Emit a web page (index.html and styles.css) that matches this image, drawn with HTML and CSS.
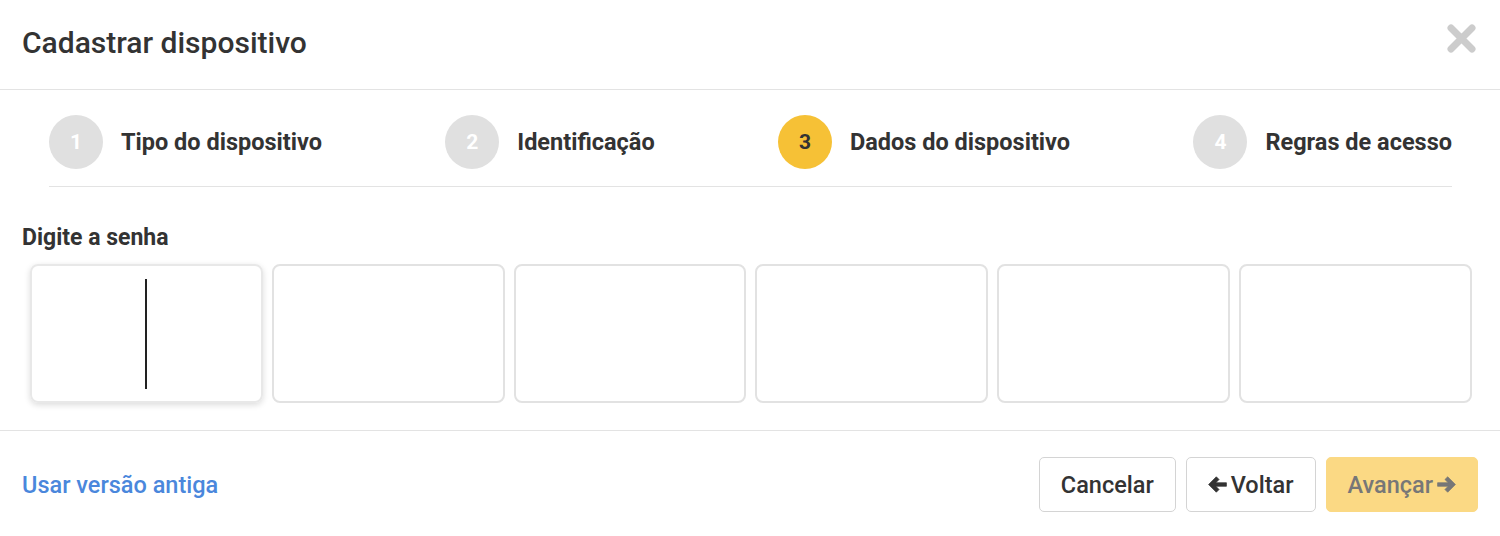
FILE: index.html
```html
<!DOCTYPE html>
<html lang="pt-BR">
<head>
  <meta charset="UTF-8" />
  <meta name="viewport" content="width=device-width, initial-scale=1.0"/>
  <title>Cadastrar dispositivo</title>
  <link rel="stylesheet" href="styles.css">
</head>
<body>

<div class="modal">
  <div class="modal-header">
    <h1>Cadastrar dispositivo</h1>
    <button class="close" aria-label="Fechar">
      <svg width="29" height="29" viewBox="0 0 29 29">
        <path d="M4 4 L25 25 M25 4 L4 25" stroke="#cccccc" stroke-width="7" stroke-linecap="round"/>
      </svg>
    </button>
  </div>

  <div class="steps-wrap">
    <div class="steps">
      <div class="step"><span class="num">1</span><span class="label">Tipo do dispositivo</span></div>
      <div class="step"><span class="num">2</span><span class="label">Identificação</span></div>
      <div class="step active"><span class="num">3</span><span class="label">Dados do dispositivo</span></div>
      <div class="step"><span class="num">4</span><span class="label">Regras de acesso</span></div>
    </div>
  </div>

  <div class="modal-body">
    <label class="field-label">Digite a senha</label>
    <div class="pin">
      <div class="pin-box focus"><span class="caret"></span></div>
      <div class="pin-box"></div>
      <div class="pin-box"></div>
      <div class="pin-box"></div>
      <div class="pin-box"></div>
      <div class="pin-box"></div>
    </div>
  </div>

  <div class="modal-footer">
    <a href="#" class="old-link">Usar versão antiga</a>
    <div class="actions">
      <button class="btn">Cancelar</button>
      <button class="btn">
        <svg class="arrow" width="19" height="19" viewBox="0 0 16 16">
          <path d="M0.5 8 L7 1.5 L9.3 3.8 L6.6 6.5 H15.5 V9.5 H6.6 L9.3 12.2 L7 14.5 Z" fill="#333" stroke="#333" stroke-width="0.6" stroke-linejoin="round"/>
        </svg>Voltar
      </button>
      <button class="btn btn-primary" disabled>Avançar
        <svg class="arrow" width="19" height="19" viewBox="0 0 16 16">
          <path d="M15.5 8 L9 1.5 L6.7 3.8 L9.4 6.5 H0.5 V9.5 H9.4 L6.7 12.2 L9 14.5 Z" fill="#777" stroke="#777" stroke-width="0.6" stroke-linejoin="round"/>
        </svg>
      </button>
    </div>
  </div>
</div>

</body>
</html>
```

FILE: styles.css
```css
body {
  margin: 0;
  background: #fff;
  font-family: 'Roboto', 'Liberation Sans', sans-serif;
  color: #333;
}
.modal {
  width: 1500px;
  height: 536px;
  background: #fff;
}
.modal-header {
  height: 90px;
  border-bottom: 1px solid #e3e3e3;
  display: flex;
  align-items: center;
  justify-content: space-between;
  padding: 0 24px 0 22px;
  box-sizing: border-box;
}
.modal-header h1 {
  margin: 0;
  font-size: 30px;
  line-height: 34px;
  font-weight: 500;
  color: #333;
  margin-top: -4px;
}
.close {
  background: none;
  border: none;
  padding: 0;
  cursor: pointer;
  display: flex;
  margin-top: -13px;
}
.steps-wrap {
  padding: 0 48px 0 49px;
}
.steps {
  display: flex;
  justify-content: space-between;
  align-items: center;
  padding: 25px 0 17px;
  border-bottom: 1px solid #e3e3e3;
}
.step {
  display: flex;
  align-items: center;
}
.step .num {
  width: 54px;
  height: 54px;
  border-radius: 50%;
  background: #e0e0e0;
  color: #fff;
  font-size: 21px;
  font-weight: 700;
  display: flex;
  align-items: center;
  justify-content: center;
  margin-right: 18px;
}
.step.active .num {
  background: #f6c136;
  color: #333;
}
.step .label {
  font-size: 23.5px;
  font-weight: 700;
  color: #333;
}
.modal-body {
  padding: 37px 28px 27px 22px;
  border-bottom: 1px solid #e3e3e3;
}
.field-label {
  display: block;
  font-size: 23px;
  line-height: 27px;
  font-weight: 700;
  margin-bottom: 13px;
}
.pin {
  display: flex;
  gap: 9px;
  padding-left: 8px;
}
.pin-box {
  flex: 1;
  height: 139px;
  box-sizing: border-box;
  border: 2px solid #e2e2e2;
  border-radius: 8px;
  display: flex;
  align-items: center;
  justify-content: center;
}
.pin-box.focus {
  border-color: #e8e8e8;
  box-shadow: 0 2px 6px rgba(0,0,0,0.14);
}
.caret {
  width: 2px;
  height: 110px;
  background: #222;
}
.modal-footer {
  display: flex;
  justify-content: space-between;
  align-items: center;
  padding: 26px 22px;
}
.old-link {
  color: #4a87dc;
  text-decoration: none;
  font-size: 23.5px;
  font-weight: 500;
}
.actions {
  display: flex;
  gap: 10px;
}
.btn {
  height: 55px;
  padding: 0 21px;
  background: #fff;
  border: 1px solid #d4d4d4;
  border-radius: 5px;
  font-family: inherit;
  font-size: 23.5px;
  font-weight: 500;
  color: #333;
  display: flex;
  align-items: center;
  gap: 4px;
  cursor: pointer;
}
.btn-primary {
  background: #fbd984;
  border-color: #fbd984;
  color: #777;
  cursor: default;
}
.arrow {
  display: block;
}
```
